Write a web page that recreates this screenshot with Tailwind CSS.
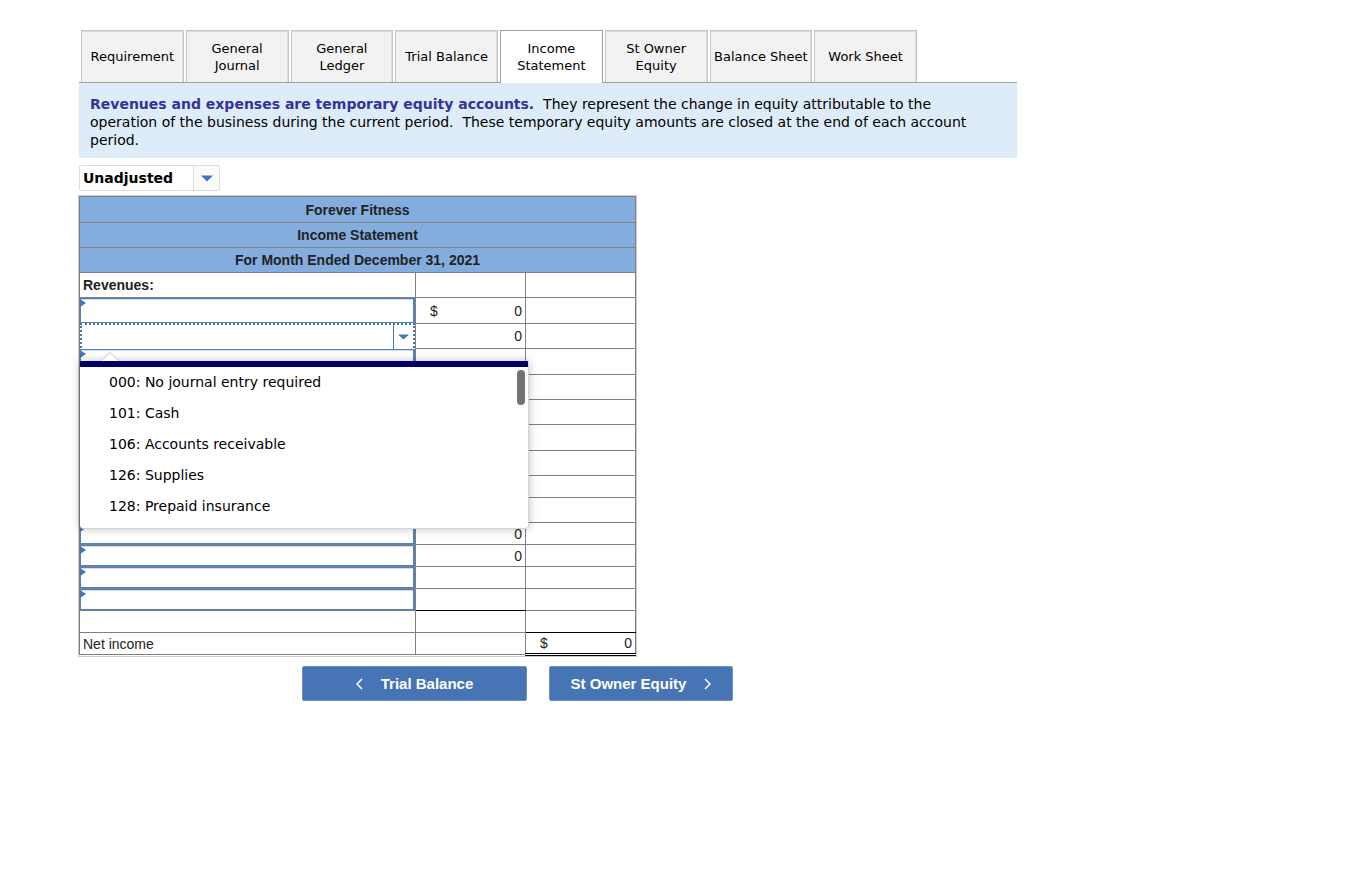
<!DOCTYPE html>
<html lang="en">
<head>
    <meta charset="UTF-8">
    <meta name="viewport" content="width=device-width, initial-scale=1.0">
    <title>Income Statement</title>
    <script src="https://cdn.jsdelivr.net/npm/@tailwindcss/browser@4"></script>
</head>
<body class="bg-white pt-[30px] pl-[79px] pr-4 text-[14px] leading-[17px] text-black font-['DejaVu_Sans',Verdana,sans-serif]">
    <main class="max-w-[938px]">
        <!-- Tabs -->
        <nav class="border-b border-[#a0a0a0] pl-[2px]">
            <div class="grid grid-cols-8 gap-[2px] max-w-[836px] text-[13px] h-[52px]">
                <button class="border border-b-0 border-[#c4c4c4] bg-[#f2f2f2] shadow-[inset_0_1px_0_#dddddd,inset_-1px_0_0_#dddddd]">Requirement</button>
                <button class="border border-b-0 border-[#c4c4c4] bg-[#f2f2f2] shadow-[inset_0_1px_0_#dddddd,inset_-1px_0_0_#dddddd]">General<br>Journal</button>
                <button class="border border-b-0 border-[#c4c4c4] bg-[#f2f2f2] shadow-[inset_0_1px_0_#dddddd,inset_-1px_0_0_#dddddd]">General<br>Ledger</button>
                <button class="border border-b-0 border-[#c4c4c4] bg-[#f2f2f2] shadow-[inset_0_1px_0_#dddddd,inset_-1px_0_0_#dddddd]">Trial Balance</button>
                <button class="border border-b-0 border-[#a0a0a0] bg-white -mb-px" aria-current="page">Income<br>Statement</button>
                <button class="border border-b-0 border-[#c4c4c4] bg-[#f2f2f2] shadow-[inset_0_1px_0_#dddddd,inset_-1px_0_0_#dddddd]">St Owner<br>Equity</button>
                <button class="border border-b-0 border-[#c4c4c4] bg-[#f2f2f2] shadow-[inset_0_1px_0_#dddddd,inset_-1px_0_0_#dddddd] whitespace-nowrap">Balance Sheet</button>
                <button class="border border-b-0 border-[#c4c4c4] bg-[#f2f2f2] shadow-[inset_0_1px_0_#dddddd,inset_-1px_0_0_#dddddd]">Work Sheet</button>
            </div>
        </nav>

        <p class="bg-[#deebf8] pt-3 pb-[9px] px-[11px] leading-[18px]"><b class="text-[#333399]">Revenues and expenses are temporary equity accounts.</b>&nbsp; They represent the change in equity attributable to the<br>operation of the business during the current period.&nbsp; These temporary equity amounts are closed at the end of each account<br>period.</p>

        <div class="relative inline-block mt-[7px] mb-[5px] align-top">
            <select aria-label="Balance type" class="appearance-none block w-[141px] h-[26px] pl-[3px] pr-7 border border-[#dddddd] rounded-xs bg-white font-bold">
                <option>Unadjusted</option>
                <option>Adjusted</option>
            </select>
            <span class="absolute right-px inset-y-px w-[26px] flex items-center justify-center border-l border-[#dddddd] bg-[#fafafa] pointer-events-none">
                <svg class="w-3 h-[7px]" viewBox="0 0 12 7"><path d="M0 0.5h12L6 6.5z" fill="#4674b5"/></svg>
            </span>
        </div>

        <!-- Income statement -->
        <table class="table-fixed border-collapse w-[557px] text-[14px] leading-[16px] text-[#222222] font-['Liberation_Sans',Arial,sans-serif] border border-[#808080] outline outline-[#cccccc]">
            <colgroup>
                <col class="w-[336px]">
                <col class="w-[110px]">
                <col class="w-[110px]">
            </colgroup>
            <thead class="bg-[#84addf]">
                <tr class="h-[26px]"><th colspan="3" class="border border-[#808080] p-0">Forever Fitness</th></tr>
                <tr class="h-[25px]"><th colspan="3" class="border border-[#808080] p-0">Income Statement</th></tr>
                <tr class="h-[25px]"><th colspan="3" class="border border-[#808080] p-0">For Month Ended December 31, 2021</th></tr>
            </thead>
            <tbody>
                <tr class="h-[25px]">
                    <th class="border border-[#808080] p-0 pl-[3px] text-left">Revenues:</th>
                    <td class="border border-[#808080] p-0"></td>
                    <td class="border border-[#808080] p-0"></td>
                </tr>
                <tr class="h-[26px]">
                    <td class="border border-[#808080] p-0">
                        <div class="relative">
                            <input aria-label="Revenue account 1" class="block w-full h-[25px] border border-r-2 border-[#4f81c2] shadow-[inset_0_1px_0_#cfdff2]">
                            <svg class="absolute left-0 top-px w-[6px] h-[8px]" viewBox="0 0 6 8"><path d="M0 0l6 4-6 4z" fill="#4674b5"/></svg>
                        </div>
                    </td>
                    <td class="border border-[#808080] p-0 pl-[14px] pr-[3px]"><div class="flex justify-between"><span>$</span><span>0</span></div></td>
                    <td class="border border-[#808080] p-0"></td>
                </tr>
                <tr class="h-[25px]">
                    <td class="border border-[#808080] p-0">
                        <div class="relative h-[24px]">
                            <div class="relative -mt-[2px] flex h-[28px] border-2 border-dotted border-[#4674b5] bg-white">
                                <input role="combobox" aria-expanded="true" aria-controls="accounts" aria-label="Revenue account 2" class="flex-1 min-w-0 outline-none">
                                <button aria-label="Show accounts" class="w-5 border-l border-[#4674b5] flex items-center justify-center">
                                    <svg class="w-[11px] h-[6px]" viewBox="0 0 11 6"><path d="M0 0.5h11L5.5 5.5z" fill="#4674b5"/></svg>
                                </button>
                            </div>
                            <!-- Account list -->
                            <div class="absolute z-10 left-0 top-[38px] w-[449px] border-r border-b border-[#d4d4d4] rounded-b-[4px] bg-white shadow-[0_0_10px_rgba(0,0,0,0.25)] font-['DejaVu_Sans',Verdana,sans-serif] text-black leading-[17px]">
                                <svg class="absolute left-[21px] -top-[9px] w-[18px] h-[9px]" viewBox="0 0 18 9"><path d="M0 9L9 0.5 18 9" fill="#fff" stroke="#c8c8c8"/></svg>
                                <div class="h-[6px] bg-[#000066]"></div>
                                <ul id="accounts" role="listbox" class="pl-[29px] pb-[6px]">
                                    <li role="option" class="py-[7px]">000: No journal entry required</li>
                                    <li role="option" class="py-[7px]">101: Cash</li>
                                    <li role="option" class="py-[7px]">106: Accounts receivable</li>
                                    <li role="option" class="py-[7px]">126: Supplies</li>
                                    <li role="option" class="py-[7px]">128: Prepaid insurance</li>
                                </ul>
                                <span class="absolute right-[3px] top-[9px] w-2 h-[35px] rounded-full bg-[#737171]"></span>
                            </div>
                        </div>
                    </td>
                    <td class="border border-[#808080] p-0 pr-[3px] text-right">0</td>
                    <td class="border border-[#808080] p-0"></td>
                </tr>
                <tr class="h-[26px]">
                    <td class="border border-[#808080] p-0">
                        <div class="relative">
                            <input aria-label="Revenue account 3" class="block w-full h-[25px] border border-r-2 border-[#4f81c2] shadow-[inset_0_1px_0_#cfdff2]">
                            <svg class="absolute left-0 top-px w-[6px] h-[8px]" viewBox="0 0 6 8"><path d="M0 0l6 4-6 4z" fill="#4674b5"/></svg>
                        </div>
                    </td>
                    <td class="border border-[#808080] p-0"></td>
                    <td class="border border-[#808080] p-0"></td>
                </tr>
                <tr class="h-[25px]"><td class="border border-[#808080] p-0"></td><td class="border border-[#808080] p-0"></td><td class="border border-[#808080] p-0"></td></tr>
                <tr class="h-[25px]"><td class="border border-[#808080] p-0"></td><td class="border border-[#808080] p-0"></td><td class="border border-[#808080] p-0"></td></tr>
                <tr class="h-[26px]"><td class="border border-[#808080] p-0"></td><td class="border border-[#808080] p-0"></td><td class="border border-[#808080] p-0"></td></tr>
                <tr class="h-[25px]"><td class="border border-[#808080] p-0"></td><td class="border border-[#808080] p-0"></td><td class="border border-[#808080] p-0"></td></tr>
                <tr class="h-[22px]"><td class="border border-[#808080] p-0"></td><td class="border border-[#808080] p-0"></td><td class="border border-[#808080] p-0"></td></tr>
                <tr class="h-[25px]"><td class="border border-[#808080] p-0"></td><td class="border border-[#808080] p-0"></td><td class="border border-[#808080] p-0"></td></tr>
                <tr class="h-[22px]">
                    <td class="border border-[#808080] p-0">
                        <div class="relative">
                            <input aria-label="Expense account 1" class="block w-full h-[21px] border border-r-2 border-[#4f81c2] shadow-[inset_0_1px_0_#cfdff2]">
                            <svg class="absolute left-0 top-px w-[6px] h-[8px]" viewBox="0 0 6 8"><path d="M0 0l6 4-6 4z" fill="#4674b5"/></svg>
                        </div>
                    </td>
                    <td class="border border-[#808080] p-0 pr-[3px] text-right">0</td>
                    <td class="border border-[#808080] p-0"></td>
                </tr>
                <tr class="h-[22px]">
                    <td class="border border-[#808080] p-0">
                        <div class="relative">
                            <input aria-label="Expense account 2" class="block w-full h-[21px] border border-r-2 border-[#4f81c2] shadow-[inset_0_1px_0_#cfdff2]">
                            <svg class="absolute left-0 top-px w-[6px] h-[8px]" viewBox="0 0 6 8"><path d="M0 0l6 4-6 4z" fill="#4674b5"/></svg>
                        </div>
                    </td>
                    <td class="border border-[#808080] p-0 pr-[3px] text-right">0</td>
                    <td class="border border-[#808080] p-0"></td>
                </tr>
                <tr class="h-[22px]">
                    <td class="border border-[#808080] p-0">
                        <div class="relative">
                            <input aria-label="Expense account 3" class="block w-full h-[21px] border border-r-2 border-[#4f81c2] shadow-[inset_0_1px_0_#cfdff2]">
                            <svg class="absolute left-0 top-px w-[6px] h-[8px]" viewBox="0 0 6 8"><path d="M0 0l6 4-6 4z" fill="#4674b5"/></svg>
                        </div>
                    </td>
                    <td class="border border-[#808080] p-0"></td>
                    <td class="border border-[#808080] p-0"></td>
                </tr>
                <tr class="h-[22px]">
                    <td class="border border-[#808080] p-0">
                        <div class="relative">
                            <input aria-label="Expense account 4" class="block w-full h-[21px] border border-r-2 border-[#4f81c2] shadow-[inset_0_1px_0_#cfdff2]">
                            <svg class="absolute left-0 top-px w-[6px] h-[8px]" viewBox="0 0 6 8"><path d="M0 0l6 4-6 4z" fill="#4674b5"/></svg>
                        </div>
                    </td>
                    <td class="border border-[#808080] border-b-black p-0"></td>
                    <td class="border border-[#808080] p-0"></td>
                </tr>
                <tr class="h-[22px]">
                    <td class="border border-[#808080] p-0"></td>
                    <td class="border border-[#808080] p-0"></td>
                    <td class="border border-[#808080] border-b-black p-0"></td>
                </tr>
                <tr class="h-[22px]">
                    <td class="border border-[#808080] p-0 pl-[3px]">Net income</td>
                    <td class="border border-[#808080] p-0"></td>
                    <td class="border border-[#808080] border-b-3 border-b-black [border-bottom-style:double] p-0 pl-[14px] pr-[3px]"><div class="flex justify-between"><span>$</span><span>0</span></div></td>
                </tr>
            </tbody>
        </table>

        <!-- Previous / next -->
        <div class="flex gap-[22px] mt-[10px] pl-[223px] text-[15px] font-bold text-white font-['Liberation_Sans',Arial,sans-serif]">
            <button class="w-[225px] h-[35px] flex items-center justify-center gap-[18px] rounded-xs border border-[#6b90c6] bg-[#4674b5]">
                <svg class="w-[7px] h-3" viewBox="0 0 7 12" fill="none" stroke="currentColor" stroke-width="1.5"><path d="M6 1L1 6l5 5"/></svg>
                Trial Balance
            </button>
            <button class="w-[184px] h-[35px] flex items-center justify-center gap-[18px] rounded-xs border border-[#6b90c6] bg-[#4674b5]">
                St Owner Equity
                <svg class="w-[7px] h-3" viewBox="0 0 7 12" fill="none" stroke="currentColor" stroke-width="1.5"><path d="M1 1l5 5-5 5"/></svg>
            </button>
        </div>
    </main>
</body>
</html>
